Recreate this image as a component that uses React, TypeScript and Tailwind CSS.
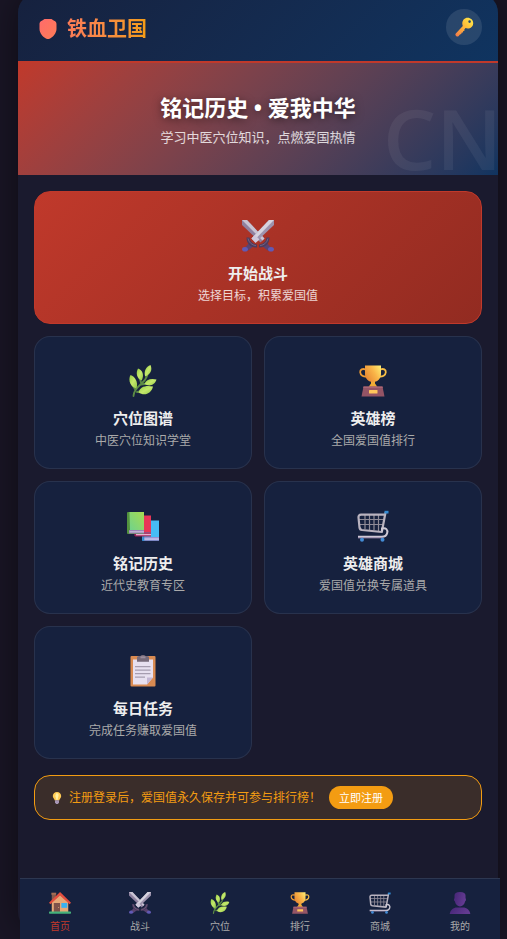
import { useState } from 'react';
import type { ReactNode } from 'react';

type IconProps = { className?: string };

function ShieldIcon({ className }: IconProps) {
  return (
    <svg viewBox="0 0 18 20" className={className} aria-hidden="true">
      <defs>
        <linearGradient id="shield" x1="0" y1="0" x2="1" y2="1">
          <stop offset="0" stopColor="#ff6b6b" />
          <stop offset="1" stopColor="#fd7c56" />
        </linearGradient>
      </defs>
      <path d="M5.500 0h7c1.200 1 2.400 1.600 3.600 2.300.9.600 1.400 1.600 1.400 3V10c0 3.700-3.200 7.700-6 9.300-1.600 1-3.400 1-5 0C3.700 17.700.500 13.700.500 10V5.300c0-1.400.5-2.400 1.400-3C3.100 1.600 4.300 1 5.500 0z" fill="url(#shield)" />
    </svg>
  );
}

function KeyIcon({ className }: IconProps) {
  return (
    <svg viewBox="0 0 20 20" className={className} aria-hidden="true">
      <defs>
        <linearGradient id="key" x1="1" y1="0" x2="0" y2="1">
          <stop offset="0" stopColor="#fff04a" />
          <stop offset="0.5" stopColor="#ffb638" />
          <stop offset="1" stopColor="#f2784b" />
        </linearGradient>
      </defs>
      <path
        fillRule="evenodd"
        d="M13.500.8c3.200 0 5.700 2.300 5.700 5.400s-2.500 5.300-5.500 5.300c-.8 0-1.500-.1-2.200-.4l-1.200 1.300.2 1.300-1.200.4-.5 1.400-1.300.3-.2 1.300-1.400.3-1.200 1.500c-.6.6-1.600.7-2.300.3-1-.5-1.400-1.700-.6-2.600l7-7.500c-.3-.8-.5-1.700-.5-2.600C8.300 3.200 10.600.8 13.500.8zM15.600 3.300a1.300 1.300 0 1 0 0 2.600 1.300 1.300 0 0 0 0-2.600z"
        fill="url(#key)"
      />
    </svg>
  );
}

function SwordsIcon({ className }: IconProps) {
  return (
    <svg viewBox="0 0 32 32" className={className} aria-hidden="true">
      <path d="M0 0h5l17.500 18.500-4 4L0 5z" fill="#8f819f" />
      <path d="M0 0h5l17.500 18.500-2 2z" fill="#c9c4d3" />
      <path d="M27 0h5v5L13.500 22.500l-4-4z" fill="#9d93ad" />
      <path d="M27 0h5L12 20.500l-2.500-2z" fill="#d6d3de" />
      <path d="M9.500 18.500L13 15l4.500 4.500-4 3.500z" fill="#cfc8da" />
      <path d="M8 22l4 4-6.500 5-3-3z" fill="#5a4370" />
      <path d="M24 22l-4 4 6.500 5 3-3z" fill="#5a4370" />
      <path d="M4.500 17.500h3c.5 4 3 6.500 7.500 7v3C9 27.800 4.500 24 4.500 17.500z" fill="#4c3c5e" />
      <path d="M27.500 17.500h-3c-.5 4-3 6.500-7.500 7v3c6 .3 10.500-3.500 10.500-10z" fill="#4c3c5e" />
      <path d="M6 18.500c1 4 3.500 6.500 8 7.200" stroke="#746082" fill="none" />
      <path d="M26 18.500c-1 4-3.500 6.500-8 7.200" stroke="#746082" fill="none" />
      <ellipse cx="3" cy="29.300" rx="2.900" ry="2.300" fill="#6159b5" />
      <ellipse cx="29" cy="29.300" rx="2.900" ry="2.300" fill="#6159b5" />
    </svg>
  );
}

function HerbIcon({ className }: IconProps) {
  return (
    <svg viewBox="0 0 32 32" className={className} aria-hidden="true">
      <defs>
        <linearGradient id="leaf" x1="0" y1="0" x2="1" y2="1">
          <stop offset="0" stopColor="#93cf42" />
          <stop offset="0.5" stopColor="#c5e86c" />
          <stop offset="1" stopColor="#8fc746" />
        </linearGradient>
      </defs>
      <path d="M6.500 31c0-5 3.500-8.500 8-12.500 3-2.700 5-5 6-9M8.500 25L5.500 20M14.500 19L12.500 13M14 19.500l7-1M10 27l6-1" stroke="#5c8b45" strokeWidth="1.800" fill="none" strokeLinecap="round" />
      <g fill="url(#leaf)">
        <path d="M3.500 10C8 11.500 11.500 17 9.500 23.500 4 22.500.500 15.500 3.500 10z" />
        <path d="M11 3.500c4.500 1.500 6.500 6.500 3.700 12C9.800 13.500 8.500 8 11 3.500z" />
        <path d="M23.500 0c2 4.500.5 9-5.300 11.500C16.500 6.500 19 1.500 23.500 0z" />
        <path d="M17.500 19c1.500-4.500 6.500-6 12-4.500-1.500 5.500-7 7.500-12 4.500z" />
        <path d="M11.500 27.500c1.500-6 7.500-7.500 14.500-6-1.500 7-8.500 10-14.500 6z" />
      </g>
    </svg>
  );
}

function TrophyIcon({ className }: IconProps) {
  return (
    <svg viewBox="0 0 32 32" className={className} aria-hidden="true">
      <defs>
        <linearGradient id="cup" x1="0" y1="0.600" x2="1" y2="0">
          <stop offset="0" stopColor="#e98b35" />
          <stop offset="0.500" stopColor="#f9b548" />
          <stop offset="1" stopColor="#fff176" />
        </linearGradient>
      </defs>
      <path d="M8.500 4.500c-3-1.200-5.500 0-5.300 2.800.2 3 3.200 4.700 6.800 4.300" stroke="#ef9b33" strokeWidth="1.800" fill="none" />
      <path d="M23.500 4.500c3-1.200 5.500 0 5.300 2.800-.2 3-3.200 4.700-6.800 4.300" stroke="#f6bd45" strokeWidth="1.800" fill="none" />
      <path d="M14 15h4v3.500l2.500 3.500h-9l2.500-3.500z" fill="#f0ac35" />
      <path d="M8 .5h16V9c0 4.500-3.500 8-8 8s-8-3.500-8-8z" fill="url(#cup)" />
      <path d="M6.500 21.500h19l2 10h-23z" fill="#945465" />
      <path d="M6.500 21.500h19l.3 1.500H6.200z" fill="#a96574" />
      <rect x="12" y="25" width="8.500" height="3.500" rx=".5" fill="#ffc65b" />
    </svg>
  );
}

function BooksIcon({ className }: IconProps) {
  return (
    <svg viewBox="0 0 32 32" className={className} aria-hidden="true">
      <defs>
        <linearGradient id="book" x1="1" y1="0" x2="0" y2="1">
          <stop offset="0" stopColor="#a6dc50" />
          <stop offset="1" stopColor="#70d28c" />
        </linearGradient>
      </defs>
      <path d="M16 10.500h16v20H15z" fill="#46bcf5" />
      <path d="M15.500 27H32v3.800H16z" fill="#9990d2" />
      <path d="M17 28.300h15v1.500H17z" fill="#c6c5eb" />
      <path d="M15.300 25.500h2v5.300h-2z" fill="#2d8dd0" />
      <path d="M8 5.500h16v17H8z" fill="#e83657" />
      <path d="M7.500 22.500H24v4H8.500c-1 0-1.500-1-1-4z" fill="#9d2457" />
      <path d="M9 23.800h15v1.500H9z" fill="#e9afd0" />
      <rect width="17" height="22" y="2" rx="1" fill="#52923e" />
      <path d="M2.500 2H17v18H3z" fill="url(#book)" />
      <path d="M2 20h15v3.500H2z" fill="#9c83b7" />
      <path d="M2.500 21.200H17v1.200H2.500z" fill="#c9bdd8" />
    </svg>
  );
}

function CartIcon({ className }: IconProps) {
  return (
    <svg viewBox="0 0 32 32" className={className} aria-hidden="true">
      <path d="M8 5v14M12.500 5v15M17 5v15M21.500 5v16M2 9.500h24M2.500 14.500h23" stroke="#8f8b97" strokeWidth="1.200" />
      <path d="M28.500 2.500L24.800 22 5 20c-1.500-.2-2.300-1-2.500-2.500L1.500 7.500C1.300 5.700 2.300 4.700 4 4.700h23" stroke="#b9b3bf" strokeWidth="2.200" fill="none" strokeLinejoin="round" />
      <path d="M25 21.500v-3c4-1 6 1.200 5.200 4.500-.6 2.300-2.300 3.800-5.200 3.800H1" stroke="#cec9d5" strokeWidth="2" fill="none" />
      <path d="M1 27.800h25" stroke="#a998ba" strokeWidth="1" />
      <path d="M27.500.8h4v2.700h-4z" fill="#338bd2" />
      <circle cx="5" cy="29.800" r="2" fill="#438bd4" />
      <circle cx="25.500" cy="29.800" r="2" fill="#438bd4" />
    </svg>
  );
}

function ClipboardIcon({ className }: IconProps) {
  return (
    <svg viewBox="0 0 32 32" className={className} aria-hidden="true">
      <rect x="3.500" y="1" width="25" height="30.500" rx="1" fill="#d98b52" />
      <path d="M6 4.500h20v18L20 29.500H6z" fill="#e7e0f0" />
      <path d="M20 29.500v-7h6z" fill="#c3b6d4" />
      <path d="M10 2.500c0-1 1-1.500 3.500-1.500 1-1.300 4-1.300 5 0C21 1 22 1.500 22 2.500v4.200H10z" fill="#766a79" />
      <path d="M13.500 1.300h5v2h-5z" fill="#9c8e9d" />
      <path d="M8 11.700h15.500M8 15.200h15.500M8 18.700h15.500M8 22.200h10" stroke="#a69db0" strokeWidth="1.300" />
    </svg>
  );
}

function HouseIcon({ className }: IconProps) {
  return (
    <svg viewBox="0 0 32 32" className={className} aria-hidden="true">
      <path d="M4 2h6v12H4z" fill="#8b5b4b" />
      <path d="M3.500 1h7v3h-7z" fill="#a56d55" />
      <path d="M4 15L16 4l12 11v14H4z" fill="#e6a877" />
      <path d="M0 15.500L15 1c.7-.7 1.500-.7 2.200 0L32 15.500l-2 2.200L16 5 2 17.700z" fill="#e44f3f" />
      <rect x="7" y="16" width="9" height="13" fill="#80524a" />
      <circle cx="14" cy="22.500" r=".8" fill="#d6a077" />
      <rect x="18" y="16" width="8.500" height="7" fill="#38b1f1" />
      <rect x="0" y="28.500" width="32" height="3" rx="1" fill="#45b17b" />
    </svg>
  );
}

function UserIcon({ className }: IconProps) {
  return (
    <svg viewBox="0 0 32 32" className={className} aria-hidden="true">
      <defs>
        <linearGradient id="user" x1="0" y1="0" x2="1" y2="0.300">
          <stop offset="0" stopColor="#452576" />
          <stop offset="1" stopColor="#643b92" />
        </linearGradient>
      </defs>
      <path d="M8 5c0-3 2.500-5 8-5s8 2 8 5v4c1 .3 1 4-.5 4.500C22.500 18.500 19.500 21 16 21s-6.500-2.500-7.500-7.500C7 13 7 9.300 8 9z" fill="url(#user)" />
      <path d="M1 32c1-6 5-9.500 11-9.500h8c6 0 10 3.500 11 9.500z" fill="url(#user)" />
    </svg>
  );
}

function BulbIcon({ className }: IconProps) {
  return (
    <svg viewBox="0 0 12 12" className={className} aria-hidden="true">
      <path d="M6 0c2.500 0 4.200 1.700 4.200 4 0 1.900-1.500 2.700-2 4.500H3.800C3.300 6.700 1.800 5.900 1.800 4 1.800 1.700 3.500 0 6 0z" fill="#ffcb55" />
      <path d="M5 1.500c1.500-.5 2.800.3 2.500 2L6.500 8h-1L4.300 4z" fill="#fff0a5" />
      <path d="M4 8.300h4v2L7 12H5l-1-1.700z" fill="#a796b5" />
    </svg>
  );
}

const cards = [
  { title: '穴位图谱', desc: '中医穴位知识学堂', Icon: HerbIcon },
  { title: '英雄榜', desc: '全国爱国值排行', Icon: TrophyIcon },
  { title: '铭记历史', desc: '近代史教育专区', Icon: BooksIcon },
  { title: '英雄商城', desc: '爱国值兑换专属道具', Icon: CartIcon },
  { title: '每日任务', desc: '完成任务赚取爱国值', Icon: ClipboardIcon },
];

const tabs = [
  { label: '首页', Icon: HouseIcon },
  { label: '战斗', Icon: SwordsIcon },
  { label: '穴位', Icon: HerbIcon },
  { label: '排行', Icon: TrophyIcon },
  { label: '商城', Icon: CartIcon },
  { label: '我的', Icon: UserIcon },
];

function CardBody({ icon, title, desc }: { icon: ReactNode; title: string; desc: string }) {
  return (
    <>
      <span className="mb-1 flex h-[47px] items-center">{icon}</span>
      <span className="mb-1 text-[15px] leading-5 font-bold text-[#eeeeee]">{title}</span>
      <span className="text-xs leading-[18px]">{desc}</span>
    </>
  );
}

export default function App() {
  const [active, setActive] = useState('首页');

  return (
    <div className="min-h-screen overflow-hidden bg-[#1a1626] pr-[9px] pl-[18px] font-['Open_Sans','Noto_Sans_CJK_SC',sans-serif] text-[#eeeeee]">
      <div className="-mt-[7px] min-h-screen overflow-hidden rounded-[20px] bg-[#1a1a2e] pb-20 shadow-[0_0_40px_rgba(0,0,0,0.5)]">
        {/* 顶部栏 */}
        <header className="flex items-center justify-between border-b-2 border-[#c0392b] bg-linear-135 from-[#16213e] to-[#0f3460] px-4 py-4">
          <div className="flex items-center gap-2.5 pt-1 pl-[5px]">
            <ShieldIcon className="h-5 w-[18px]" />
            <h1 className="bg-linear-to-r from-[#fc7b57] to-[#f39c12] bg-clip-text text-xl leading-7 font-bold text-transparent">铁血卫国</h1>
          </div>
          <button type="button" aria-label="登录" className="flex size-9 items-center justify-center rounded-full bg-white/10">
            <KeyIcon className="size-5" />
          </button>
        </header>

        {/* 横幅 */}
        <section className="relative overflow-hidden bg-linear-135 from-[#c0392b] to-[#0f3460] px-5 pt-[30px] pb-7 text-center">
          <h2 className="mb-1.5 text-[22px] leading-[29px] font-bold text-white text-shadow-[0_2px_8px_rgba(0,0,0,0.5)]">铭记历史 • 爱我中华</h2>
          <p className="text-[13px] leading-[19px] text-white/80">学习中医穴位知识，点燃爱国热情</p>
          <span aria-hidden="true" className="absolute -right-1 -bottom-2 text-[84px] leading-[90px] font-semibold text-white/6">CN</span>
        </section>

        <main className="p-4">
          <div className="grid grid-cols-2 gap-3">
            <button type="button" className="col-span-2 flex flex-col items-center rounded-2xl border border-[#c0392b] bg-linear-135 from-[#c0392b] to-[#922b21] pt-5 pb-[18px] text-white/80">
              <CardBody icon={<SwordsIcon className="size-8" />} title="开始战斗" desc="选择目标，积累爱国值" />
            </button>
            {cards.map(({ title, desc, Icon }) => (
              <button key={title} type="button" className="flex flex-col items-center rounded-2xl border border-white/8 bg-[#16213e] pt-5 pb-[18px] text-[#aaaaaa]">
                <CardBody icon={<Icon className="size-8" />} title={title} desc={desc} />
              </button>
            ))}
          </div>

          {/* 注册提示 */}
          <div className="mt-4 flex items-center rounded-2xl border border-[#f39c12] bg-[#f39c12]/15 px-4 py-2.5 text-xs text-[#f39c12]">
            <BulbIcon className="mr-1.5 size-3" />
            <span className="pt-px">注册登录后，爱国值永久保存并可参与排行榜！</span>
            <button type="button" className="ml-2 rounded-full bg-[#f39c12] px-2.5 py-1 text-[11px] leading-[15px] whitespace-nowrap text-white">立即注册</button>
          </div>
        </main>
      </div>

      {/* 底部导航 */}
      <nav className="fixed right-[7px] bottom-0 left-5 grid grid-cols-6 border-t border-white/10 bg-[#16213e]">
        {tabs.map(({ label, Icon }) => (
          <button
            key={label}
            type="button"
            onClick={() => setActive(label)}
            className={`flex flex-col items-center gap-1 pt-[13px] pb-[5px] text-[10px] leading-4 ${active === label ? 'text-[#c0392b]' : 'text-[#aaaaaa]'}`}
          >
            <Icon className="size-[22px]" />
            <span>{label}</span>
          </button>
        ))}
      </nav>
    </div>
  );
}
